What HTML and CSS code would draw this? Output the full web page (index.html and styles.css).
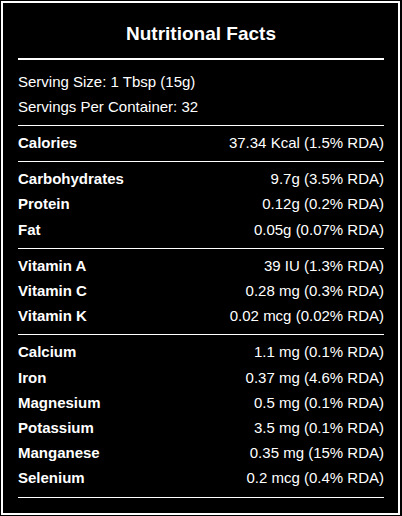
FILE: index.html
```html
<!DOCTYPE html>
<html>
<head>
<meta charset="utf-8">
<link rel="stylesheet" href="styles.css">
</head>
<body>
<div class="card">
  <h1 class="title">Nutritional Facts</h1>
  <div class="section serving">
    <div class="row">Serving Size: 1 Tbsp (15g)</div>
    <div class="row">Servings Per Container: 32</div>
  </div>
  <div class="section">
    <div class="row"><span class="label">Calories</span><span>37.34 Kcal (1.5% RDA)</span></div>
  </div>
  <div class="section">
    <div class="row"><span class="label">Carbohydrates</span><span>9.7g (3.5% RDA)</span></div>
    <div class="row"><span class="label">Protein</span><span>0.12g (0.2% RDA)</span></div>
    <div class="row"><span class="label">Fat</span><span>0.05g (0.07% RDA)</span></div>
  </div>
  <div class="section">
    <div class="row"><span class="label">Vitamin A</span><span>39 IU (1.3% RDA)</span></div>
    <div class="row"><span class="label">Vitamin C</span><span>0.28 mg (0.3% RDA)</span></div>
    <div class="row"><span class="label">Vitamin K</span><span>0.02 mcg (0.02% RDA)</span></div>
  </div>
  <div class="section last">
    <div class="row"><span class="label">Calcium</span><span>1.1 mg (0.1% RDA)</span></div>
    <div class="row"><span class="label">Iron</span><span>0.37 mg (4.6% RDA)</span></div>
    <div class="row"><span class="label">Magnesium</span><span>0.5 mg (0.1% RDA)</span></div>
    <div class="row"><span class="label">Potassium</span><span>3.5 mg (0.1% RDA)</span></div>
    <div class="row"><span class="label">Manganese</span><span>0.35 mg (15% RDA)</span></div>
    <div class="row"><span class="label">Selenium</span><span>0.2 mcg (0.4% RDA)</span></div>
  </div>
</div>
</body>
</html>
```
FILE: styles.css
```css
html, body {
  margin: 0;
  padding: 0;
  background: #000;
}
body {
  font-family: "Liberation Sans", Arial, sans-serif;
  color: #fff;
  font-size: 15px;
}
.card {
  margin: 1px 0 0 1px;
  width: 399px;
  height: 514px;
  box-sizing: border-box;
  border: 2px solid #fff;
  padding: 0 14px 0 15px;
  background: #000;
}
.title {
  margin: 0;
  padding: 20px 0 13px;
  font-size: 19px;
  font-weight: bold;
  text-align: center;
  line-height: 21.7px;
  border-bottom: 2px solid #fff;
}
.section {
  padding: 5px 0;
  border-bottom: 1px solid #fff;
}
.section.serving {
  padding-top: 10px;
}
.row {
  display: flex;
  justify-content: space-between;
  height: 25.2px;
  line-height: 24.2px;
  padding-bottom: 1px;
  box-sizing: border-box;
  white-space: nowrap;
}
.label {
  font-weight: bold;
}
```
